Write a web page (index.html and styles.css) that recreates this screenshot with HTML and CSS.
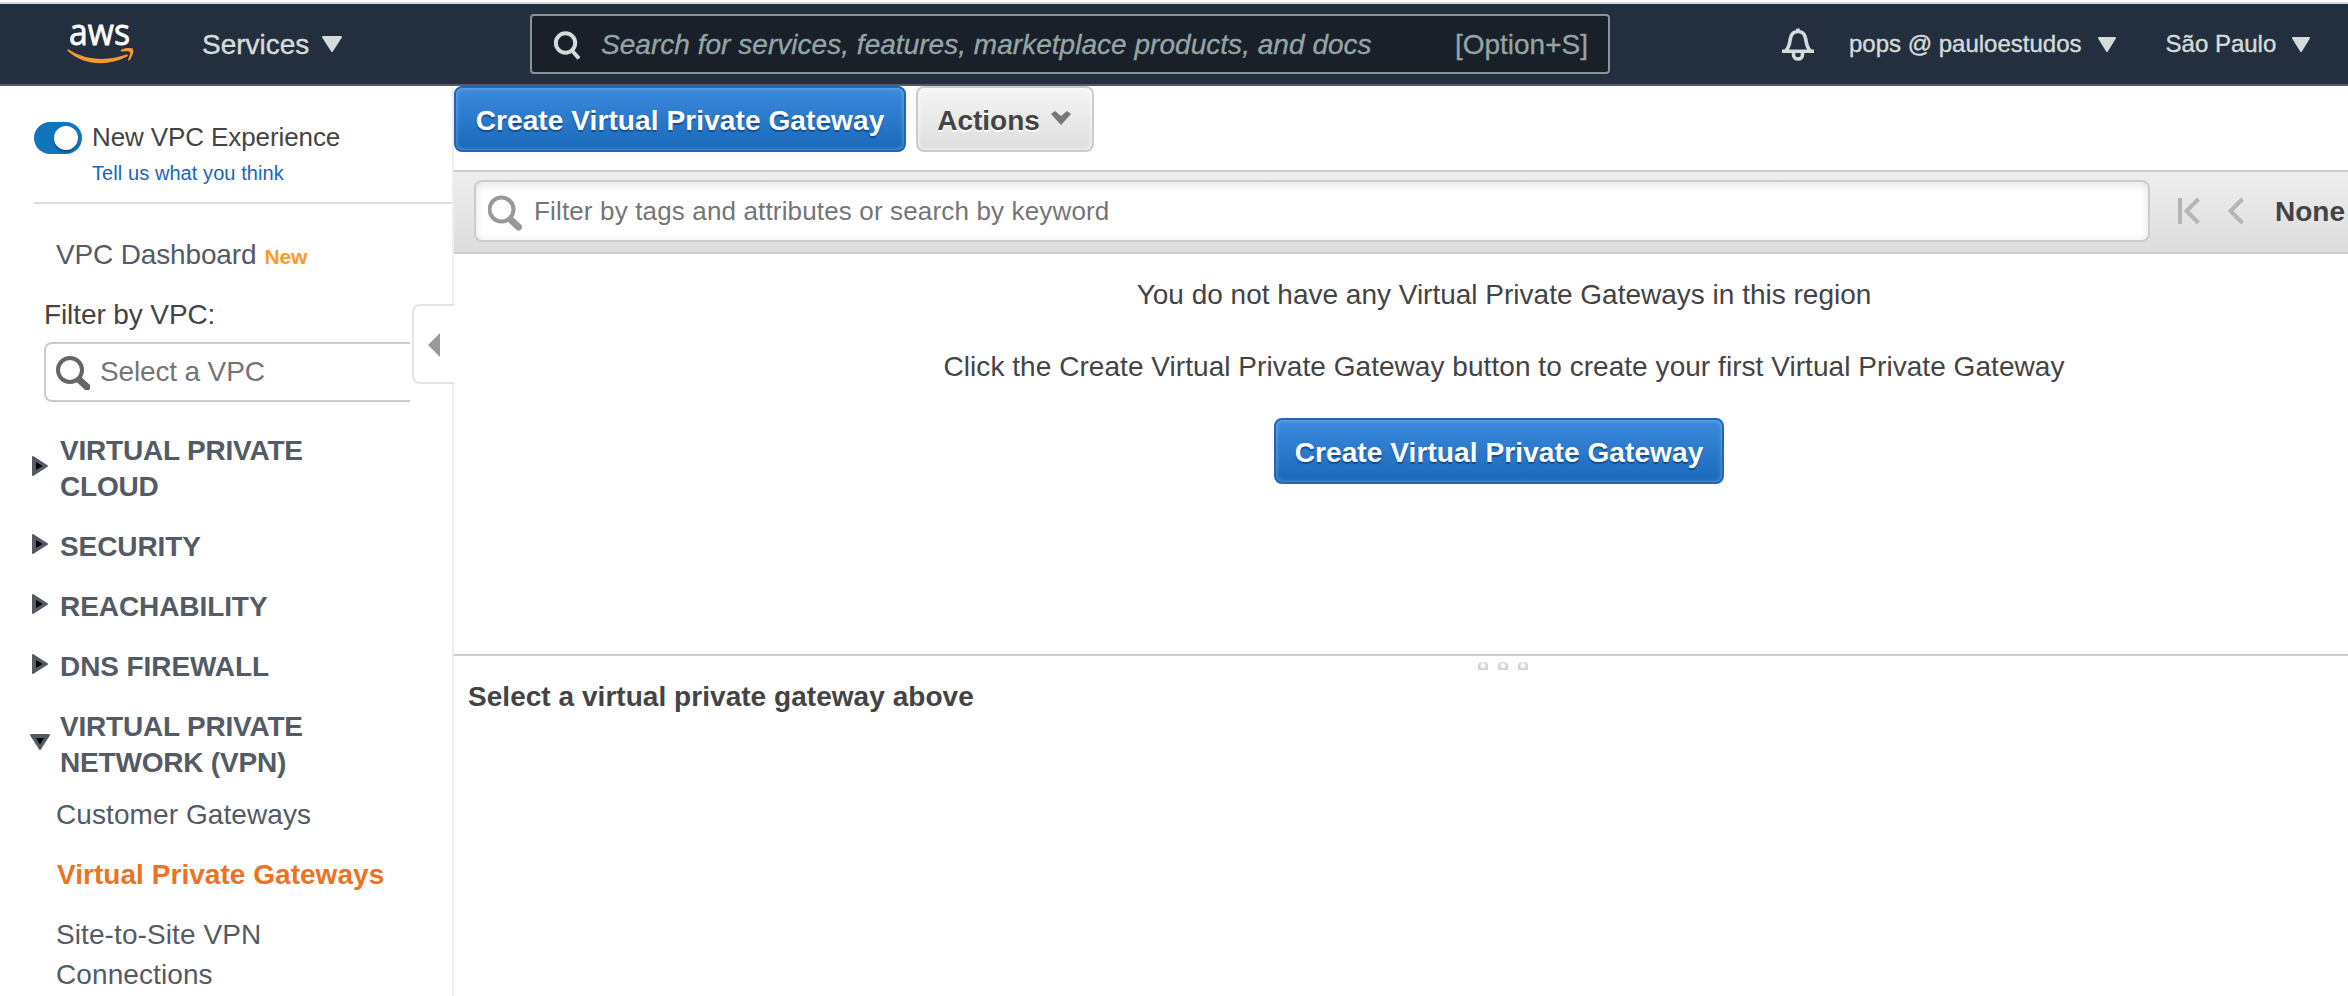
FILE: index.html
```html
<!DOCTYPE html>
<html lang="en">
<head>
<meta charset="utf-8">
<title>Virtual Private Gateways | VPC Console</title>
<link rel="stylesheet" href="styles.css">
</head>
<body>
<header class="topbar">
  <svg class="logo" width="68" height="66" viewBox="0 -24 68 66">
    <text class="logo-text" x="2" y="21.500" textLength="61" lengthAdjust="spacingAndGlyphs">aws</text>
    <path class="logo-smile" d="M1.500 26.500C20 38 41 38 59.500 31.500C61 31 61.500 32.500 60 33.500C41 43.500 17 43 .800 28C0 27 .500 26 1.500 26.500Z"/>
    <path class="logo-smile" d="M54 27C57 24.500 65 24.500 66 26C67 28 65.500 34.500 62 37.500C61.300 38 60.800 37.500 61.200 36.500C62.500 33.500 63.500 30 63 29C62.500 28 58 28 54.800 28.400C53.700 28.500 53.400 27.600 54 27Z"/>
  </svg>
  <div class="services">Services<svg class="caret-lg" width="20" height="16" viewBox="0 0 20 16"><path d="M1 1H19L10 15Z"/></svg></div>
  <div class="search">
    <svg width="28" height="30" viewBox="0 0 28 30"><circle cx="11.500" cy="12" r="9.700"/><path d="M17.500 19L25 27.500"/></svg>
    <span class="search-hint">Search for services, features, marketplace products, and docs</span>
    <span class="search-key">[Option+S]</span>
  </div>
  <svg class="bell" width="32" height="33" viewBox="0 0 32 33"><path d="M16 .500V3M3.500 23C8 18.500 7.500 14 8.500 10C9.500 5.500 12.500 3.500 16 3.500S22.500 5.500 23.500 10C24.500 14 24 18.500 28.500 23M0 23.300H32M11.500 24V26.500C11.500 29.500 13.500 31 16 31S20.500 29.500 20.500 26.500V24"/></svg>
  <div class="account">pops @ pauloestudos<svg class="caret-sm" width="18" height="15" viewBox="0 0 18 15"><path d="M1 1H17L9 14Z"/></svg></div>
  <div class="region">São Paulo<svg class="caret-sm" width="18" height="15" viewBox="0 0 18 15"><path d="M1 1H17L9 14Z"/></svg></div>
</header>
<div class="layout">
  <aside class="sidebar">
    <div class="experience">
      <span class="toggle"><span class="knob"></span></span>
      <div>
        <div class="exp-title">New VPC Experience</div>
        <a class="exp-link">Tell us what you think</a>
      </div>
    </div>
    <div class="dash">VPC Dashboard<span class="new">New</span></div>
    <div class="filter-label">Filter by VPC:</div>
    <div class="vpc-select">
      <svg width="34" height="34" viewBox="0 0 34 34"><circle cx="14" cy="14" r="12"/><path class="handle" d="M23.500 24L31 31"/></svg>
      <span>Select a VPC</span>
    </div>
    <nav class="nav">
      <div class="group"><svg class="tri" width="16" height="20" viewBox="0 0 16 20"><path class="tri-out" d="M1 1L15 10L1 19Z"/><path d="M4 6L10.500 10L4 14Z"/></svg><span>VIRTUAL PRIVATE<br>CLOUD</span></div>
      <div class="group single"><svg class="tri" width="16" height="20" viewBox="0 0 16 20"><path class="tri-out" d="M1 1L15 10L1 19Z"/><path d="M4 6L10.500 10L4 14Z"/></svg><span>SECURITY</span></div>
      <div class="group single"><svg class="tri" width="16" height="20" viewBox="0 0 16 20"><path class="tri-out" d="M1 1L15 10L1 19Z"/><path d="M4 6L10.500 10L4 14Z"/></svg><span>REACHABILITY</span></div>
      <div class="group single"><svg class="tri" width="16" height="20" viewBox="0 0 16 20"><path class="tri-out" d="M1 1L15 10L1 19Z"/><path d="M4 6L10.500 10L4 14Z"/></svg><span>DNS FIREWALL</span></div>
      <div class="group open"><svg class="tri" width="20" height="16" viewBox="0 0 20 16"><path class="tri-out" d="M1 1H19L10 15Z"/><path d="M6 4H14L10 10.500Z"/></svg><span>VIRTUAL PRIVATE<br>NETWORK (VPN)</span></div>
      <div class="links">
        <a>Customer Gateways</a>
        <a class="current">Virtual Private Gateways</a>
        <a>Site-to-Site VPN<br>Connections</a>
      </div>
    </nav>
    <div class="collapse"><svg width="12" height="24" viewBox="0 0 12 24"><path d="M12 0V24L0 12Z"/></svg></div>
  </aside>
  <main class="main">
    <div class="actions">
      <button class="btn primary">Create Virtual Private Gateway</button>
      <button class="btn plain">Actions<svg width="20" height="14" viewBox="0 0 20 14"><path d="M0 3L4 0L10 5L16 0L20 3L10 14Z"/></svg></button>
    </div>
    <div class="toolbar">
      <div class="filter">
        <svg width="35" height="36" viewBox="0 0 35 36"><circle cx="13.500" cy="14.500" r="12"/><path class="handle" d="M23 25L30.500 32"/></svg>
        <span>Filter by tags and attributes or search by keyword</span>
      </div>
      <svg class="first" width="22" height="28" viewBox="0 0 22 28"><path d="M2 1V27M20.500 2L8.500 14L20.500 26"/></svg>
      <svg class="prev" width="16" height="28" viewBox="0 0 16 28"><path d="M14.500 2L2.500 14L14.500 26"/></svg>
      <span class="none">None</span>
    </div>
    <section class="empty">
      <p class="empty-a">You do not have any Virtual Private Gateways in this region</p>
      <p class="empty-b">Click the Create Virtual Private Gateway button to create your first Virtual Private Gateway</p>
      <button class="btn primary mid">Create Virtual Private Gateway</button>
    </section>
    <section class="detail">
      <div class="grip"><i></i><i></i><i></i></div>
      <h2>Select a virtual private gateway above</h2>
    </section>
  </main>
</div>
</body>
</html>
```
FILE: styles.css
```css
* { box-sizing: border-box; }
body { margin: 0; height: 996px; overflow: hidden; background: #fff; color: #444; font: 28px/40px "Liberation Sans", Arial, sans-serif; white-space: nowrap; }
svg { display: block; flex: none; }

.topbar { margin-top: 2px; height: 84px; border-top: 2px solid #d5d9de; border-bottom: 2px solid #545b64; background: #232f3e; display: flex; align-items: flex-start; color: #d5dbdb; }
.logo { margin: -5px 0 0 67px; overflow: visible; }
.logo-text { font: 400 37px "Open Sans", sans-serif; fill: #fff; stroke: #fff; stroke-width: .8px; }
.logo-smile { fill: #f8992f; }
.services { margin: 21px 0 0 67px; width: 328px; display: flex; align-items: flex-start; -webkit-text-stroke: .4px; }
.caret-lg, .caret-sm { fill: #d5dbdb; stroke: #d5dbdb; stroke-width: 2; stroke-linejoin: round; }
.caret-lg { margin: 11px 0 0 13px; }
.caret-sm { margin: 13px 0 0 16px; }
.search { margin-top: 10px; width: 1080px; height: 60px; border: 2px solid #879596; border-radius: 4px; background: #1a202a; color: #95a5a6; display: flex; padding: 9px 20px 0 22px; -webkit-text-stroke: .3px; }
.search svg { margin-top: 6px; fill: none; stroke: #d5dbdb; stroke-width: 4; }
.search-hint { margin-left: 19px; font-style: italic; letter-spacing: .03px; }
.search-key { margin-left: auto; }
.bell { margin: 24px 0 0 172px; fill: none; stroke: #d5dbdb; stroke-width: 3.600; }
.account, .region { margin: 20px 0 0 35px; display: flex; align-items: flex-start; font-size: 24px; line-height: 40px; -webkit-text-stroke: .4px; }
.region { margin-left: 50px; }

.layout { display: flex; height: 910px; }
.sidebar { position: relative; width: 454px; border-right: 2px solid #eee; color: #545b64; }
.experience { margin-left: 34px; height: 118px; border-bottom: 2px solid #ddd; display: flex; padding-top: 36px; color: #444; }
.toggle { width: 48px; height: 32px; margin-right: 10px; border-radius: 16px; background: #1075bb; padding: 4px 4px 4px 20px; }
.knob { display: block; width: 24px; height: 24px; border-radius: 50%; background: #fff; box-shadow: 0 2px 2px #0005; }
.exp-title { font-size: 26px; line-height: 30px; letter-spacing: -.1px; }
.exp-link { display: block; margin-top: 4px; font-size: 20px; line-height: 34px; color: #1566c0; letter-spacing: .08px; }
.dash { margin: 31px 0 0 56px; letter-spacing: -.15px; }
.new { margin-left: 8px; font-size: 21px; font-weight: bold; color: #ff9927; }
.filter-label { margin: 18px 0 0 44px; height: 40px; color: #444; letter-spacing: -.1px; }
.vpc-select { margin: 7px 0 0 44px; width: 366px; height: 60px; border: 2px solid #ccc; border-right: 0; border-radius: 8px 0 0 8px; padding: 8px 0 0 10px; display: flex; color: #757575; letter-spacing: -.15px; }
.vpc-select svg { margin: 4px 10px 0 0; fill: none; stroke: #666; stroke-width: 4; }
.vpc-select .handle, .filter .handle { stroke-width: 7; stroke-linecap: round; }
.nav { margin-top: 31px; }
.group { display: flex; align-items: center; margin: 0 0 24px 32px; font-weight: bold; line-height: 36px; letter-spacing: -.2px; }
.group span { margin-left: 12px; }
.group .tri { margin-bottom: 7px; }
.single { letter-spacing: -.08px; }
.open { margin: 0 0 14px 30px; }
.open span { margin-left: 10px; }
.tri-out { fill: #545b64; stroke: #545b64; stroke-width: 2; stroke-linejoin: round; }
.links { display: flex; flex-direction: column; gap: 20px; margin-left: 56px; letter-spacing: .09px; }
.current { margin-left: 1px; font-weight: bold; color: #ec7224; letter-spacing: .04px; }
.collapse { position: absolute; right: -2px; top: 218px; width: 42px; height: 80px; border: 2px solid #e4e4e4; border-right: 0; border-radius: 8px 0 0 8px; background: #fff; padding: 27px 0 0 14px; }
.collapse svg { fill: #999; }

.main { flex: 1; min-width: 0; display: flex; flex-direction: column; }
.actions { display: flex; gap: 10px; height: 84px; }
.btn { height: 66px; margin: 0; border: 2px solid #1b68bd; border-radius: 8px; padding: 3px 0 0; font: bold 28px/40px "Liberation Sans", Arial, sans-serif; display: flex; align-items: center; justify-content: center; }
.primary { width: 452px; color: #fff; background: linear-gradient(#3b8ade, #1a68b9); box-shadow: inset 0 0 4px #fff6; text-shadow: 0 2px 1px #124d91; letter-spacing: .1px; }
.mid { width: 450px; }
.plain { width: 178px; color: #444; border-color: #ccc; background: linear-gradient(#f5f5f5, #dedede); box-shadow: inset 0 0 4px #fff; text-shadow: 0 2px 0 #fff; }
.plain svg { margin: -5px 2px 0 11px; fill: #777; }
.toolbar { height: 84px; border: 2px solid #ccc; border-width: 2px 0; background: linear-gradient(#eee, #ddd); display: flex; padding: 8px 0 0 20px; }
.filter { width: 1676px; height: 62px; border: 2px solid #ccc; border-radius: 8px; background: #fff; box-shadow: inset 0 2px 8px #0000001f; display: flex; padding: 9px 0 0 12px; color: #757575; font-size: 26px; letter-spacing: .15px; }
.filter svg { margin: 4px 11px 0 0; fill: none; stroke: #999; stroke-width: 4; }
.first, .prev { margin: 17px 0 0 28px; fill: none; stroke: #b5b5b5; stroke-width: 4; }
.none { margin: 12px 0 0 31px; font-weight: bold; }
.empty { height: 400px; display: flex; flex-direction: column; align-items: center; padding: 21px 0 0 206px; }
.empty p { margin: 0 0 32px; }
.empty-b { letter-spacing: .05px; }
.empty .mid { margin: -1px 10px 0 0; }
.detail { border-top: 2px solid #ccc; flex: 1; }
.grip { display: flex; gap: 10px; justify-content: center; margin: 6px 0 0; padding-left: 204px; }
.grip i { width: 10px; height: 8px; border-radius: 4px 4px 1px 1px; background: radial-gradient(circle at 50% 45%, #fff 1px, #d2d2d2 4px); }
h2 { margin: 7px 0 0 14px; font-size: 28px; line-height: 40px; letter-spacing: .04px; }
```
